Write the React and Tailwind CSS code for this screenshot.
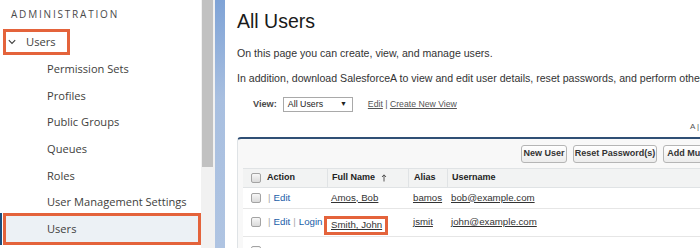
import React from "react";

function Chevron() {
  return (
    <svg width="8" height="6" viewBox="0 0 8 6" className="shrink-0">
      <path d="M0.8 1.2 L4 4.4 L7.2 1.2" fill="none" stroke="#3e3e3c" strokeWidth="1.1" />
    </svg>
  );
}

function Sidebar() {
  const items = ["Permission Sets", "Profiles", "Public Groups", "Queues", "Roles", "User Management Settings"];
  return (
    <div className="w-[201px] shrink-0 flex flex-col font-['Open_Sans',sans-serif] text-[#3e3e3c] bg-white">
      <div className="h-[29px] flex items-center pl-[11px] text-[10px] tracking-[1.8px] text-[#4a4a4a]">ADMINISTRATION</div>
      <div className="ml-[3px] w-[67px] h-[26px] border-[3px] border-[#e4633b] flex items-center">
        <div className="ml-[2px]"><Chevron /></div>
        <span className="ml-[10px] text-[11.2px]">Users</span>
      </div>
      <div className="mt-[1px] flex flex-col">
        {items.map((t) => (
          <div key={t} className="h-[26.67px] flex items-center pl-[47px] text-[11.1px] whitespace-nowrap">{t}</div>
        ))}
      </div>
      <div className="-mt-[3px] h-[32px] flex">
        <div className="w-[2px] bg-[#1b4f7e]" />
        <div className="ml-[1px] flex-1 border-[3px] border-[#e4633b] bg-[#ecf1f5] flex items-center pl-[41px] text-[11.1px]">Users</div>
      </div>
    </div>
  );
}

function Checkbox() {
  return <div className="w-[10px] h-[10px] shrink-0 rounded-[2px] border border-[#a3a3a3] bg-gradient-to-b from-[#f7f7f7] to-[#dadada]" />;
}

function Btn({ w, children }) {
  return (
    <div className={`${w} h-[18px] shrink-0 flex items-center justify-center whitespace-nowrap border border-[#b5b5b5] rounded-[3px] bg-gradient-to-b from-white to-[#ececec] text-[9px] font-bold text-[#333]`}>
      {children}
    </div>
  );
}

function UpArrow() {
  return (
    <svg width="6" height="8" viewBox="0 0 6 8" className="ml-[6px]">
      <path d="M3 7.5 V1 M1 3 L3 0.8 L5 3" fill="none" stroke="#444" strokeWidth="0.9" />
    </svg>
  );
}

function Main() {
  return (
    <div className="flex-1 min-w-0 pl-[12px] overflow-hidden bg-white font-['Liberation_Sans',Arial,sans-serif]">
      <div className="mt-[10px] h-[22px] leading-[22px] text-[19.5px] text-[#1a1a1a] whitespace-nowrap">All Users</div>
      <div className="mt-[13.5px] h-[14px] leading-[14px] text-[10.6px] text-[#333] whitespace-nowrap">
        On this page you can create, view, and manage users.
      </div>
      <div className="mt-[11px] h-[14px] leading-[14px] text-[10.6px] text-[#333] whitespace-nowrap">
        In addition, download SalesforceA to view and edit user details, reset passwords, and perform other administrative tasks.
      </div>
      <div className="mt-[12px] h-[16px] flex items-center pl-[16px] whitespace-nowrap">
        <span className="text-[9.2px] font-bold text-[#4a4a4a]">View:</span>
        <div className="ml-[6px] w-[70px] h-[15px] border border-[#a9a9a9] bg-white flex items-center justify-between pl-[4px] pr-[5px] text-[8.8px] text-[#222]">
          <span>All Users</span>
          <span className="text-[7px]">▼</span>
        </div>
        <span className="ml-[15px] text-[8.7px] text-[#555]">
          <span className="underline">Edit</span> | <span className="underline">Create New View</span>
        </span>
      </div>
      <div className="h-[24.5px] pt-[10px] pl-[453px] text-[8px] leading-[8px] text-[#555] whitespace-nowrap">
        A | B | C | D | E
      </div>
      <div className="w-[520px] border-t-[2px] border-t-[#2f4f75] border-x border-x-[#dfe3e6] rounded-t-[4px] bg-[#f8f8f8] px-[5px]">
        <div className="pt-[6px] pb-[5px] pl-[278px] flex gap-[6px]">
          <Btn w="w-[46px]">New User</Btn>
          <Btn w="w-[84px]">Reset Password(s)</Btn>
          <Btn w="w-[90px]">Add Multiple Users</Btn>
        </div>
        <div className="bg-white text-[#222]">
          <div className="h-[20px] flex items-stretch bg-[#f2f3f3] border-y border-[#e0e3e5] text-[9px] font-bold text-[#222]">
            <div className="w-[84px] flex items-center pl-[8px]">
              <Checkbox />
              <span className="ml-[6px]">Action</span>
            </div>
            <div className="w-[81px] flex items-center pl-[4px] border-l border-[#e0e3e5]">
              <span>Full Name</span>
              <UpArrow />
            </div>
            <div className="w-[39px] flex items-center pl-[5px] border-l border-[#e0e3e5]">Alias</div>
            <div className="flex-1 flex items-center pl-[4px] border-l border-[#e0e3e5]">Username</div>
          </div>
          <div className="h-[21px] flex items-center border-b border-[#e6e6e6] text-[9.7px]">
            <div className="w-[84px] flex items-center pl-[8px]">
              <Checkbox />
              <span className="ml-[7px] text-[#aaa]">|</span>
              <span className="ml-[3px] text-[#1a5ea8]">Edit</span>
            </div>
            <div className="w-[81px] pl-[4px] underline text-[#333]">Amos, Bob</div>
            <div className="w-[39px] pl-[5px] underline text-[#333]">bamos</div>
            <div className="flex-1 pl-[4px] underline text-[#333]">bob@example.com</div>
          </div>
          <div className="h-[28px] flex items-center border-b border-[#e6e6e6] text-[9.7px]">
            <div className="w-[84px] flex items-center pl-[8px] whitespace-nowrap">
              <Checkbox />
              <span className="ml-[7px] text-[#aaa]">|</span>
              <span className="ml-[3px] text-[#1a5ea8]">Edit</span>
              <span className="ml-[3px] text-[#aaa]">|</span>
              <span className="ml-[3px] text-[#1a5ea8]">Login</span>
            </div>
            <div className="w-[81px] self-start mt-[7px]">
              <div className="-ml-[3px] inline-block h-[19px] border-[3px] border-[#e4633b] pl-[4px] pr-[3px] leading-[12px] underline text-[#333] whitespace-nowrap">Smith, John</div>
            </div>
            <div className="w-[39px] pl-[5px] underline text-[#333]">jsmit</div>
            <div className="flex-1 pl-[4px] underline text-[#333]">john@example.com</div>
          </div>
          <div className="h-[28px] flex items-center text-[9.7px]">
            <div className="w-[84px] flex items-center pl-[8px]">
              <Checkbox />
            </div>
          </div>
        </div>
      </div>
    </div>
  );
}

export default function App() {
  return (
    <div className="flex w-[700px] h-[248px] overflow-hidden bg-white">
      <Sidebar />
      <div className="w-[14px] shrink-0 bg-[#f1f1f1] pl-[1px] pr-[2px]">
        <div className="h-[167px] bg-[#c1c1c1]" />
      </div>
      <div className="w-[10px] shrink-0 bg-gradient-to-b from-[#7fa3d6] via-[#a8bfe0] via-40% to-[#afc4e2]" />
      <Main />
    </div>
  );
}
